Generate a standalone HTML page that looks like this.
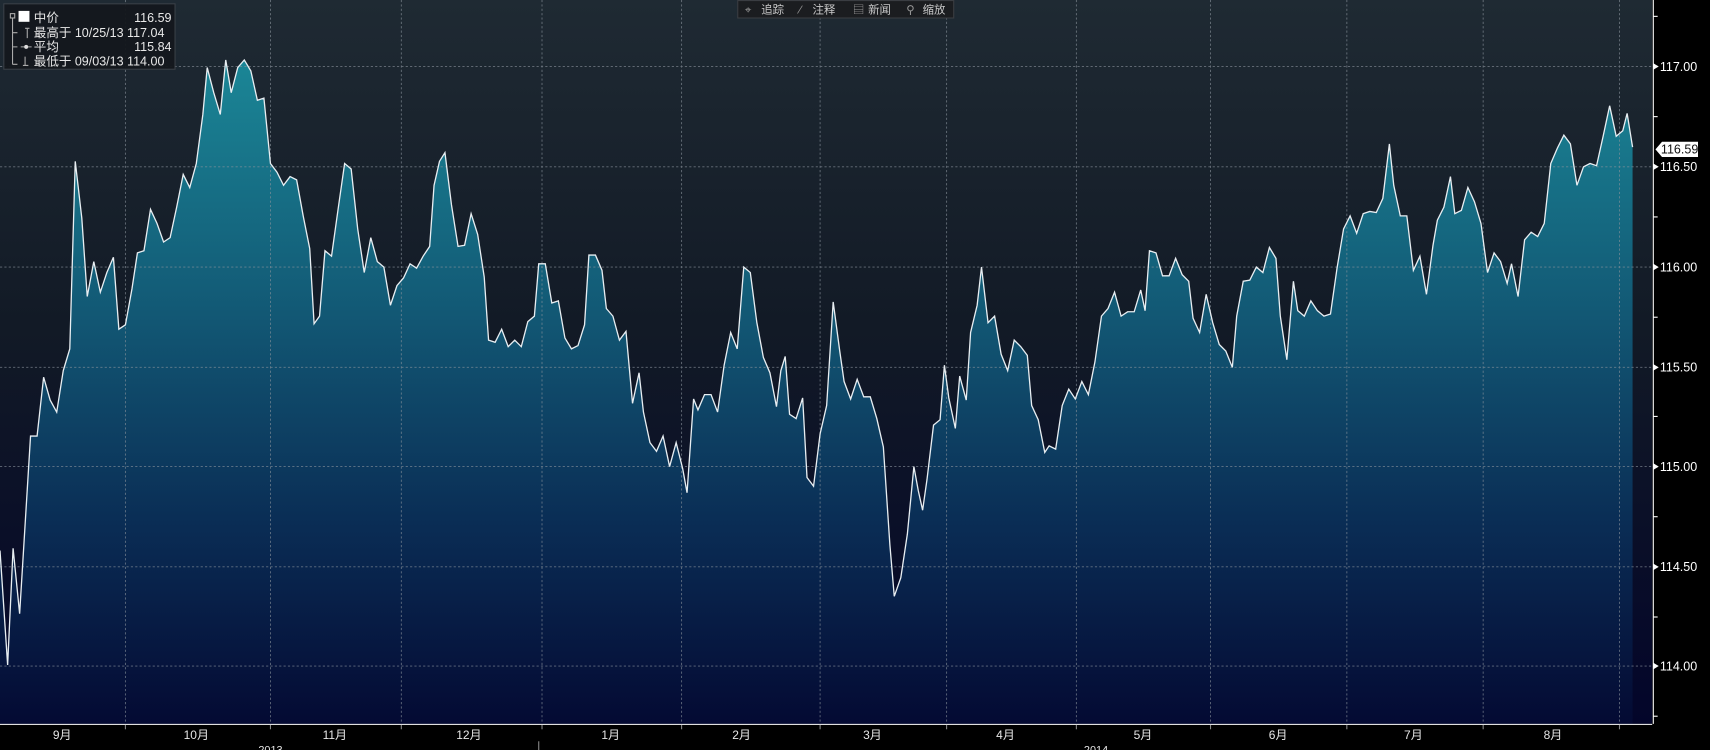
<!DOCTYPE html>
<html><head><meta charset="utf-8"><style>
html,body{margin:0;padding:0;background:#000;width:1710px;height:750px;overflow:hidden}
svg{display:block}
text{font-family:"Liberation Sans","Noto Sans CJK SC",sans-serif}
</style></head><body>
<svg width="1710" height="750" viewBox="0 0 1568 688" preserveAspectRatio="none">
<defs>
<linearGradient id="bg" x1="0" y1="0" x2="0" y2="1">
<stop offset="0" stop-color="#1f2a33"/><stop offset="0.45" stop-color="#121a26"/><stop offset="1" stop-color="#03052a"/>
</linearGradient>
<linearGradient id="fill" x1="0" y1="50" x2="0" y2="664" gradientUnits="userSpaceOnUse">
<stop offset="0" stop-color="#1b8797"/><stop offset="0.35" stop-color="#135d78"/><stop offset="0.7" stop-color="#0a2d55"/><stop offset="1" stop-color="#040a33"/>
</linearGradient>
</defs>
<rect x="0" y="0" width="1568" height="688" fill="#000"/>
<rect x="0" y="0" width="1515" height="664" fill="url(#bg)"/>
<polygon fill="url(#fill)" points="0,664 0,505 7,610 12,503 18,563 28,400 34,400 40,346 46,367 52,378 58,340 64,320 69,148 75,200 80,272 86,240 92,268 98,250 104,236 109,302 115,298 121,265 126,232 132,230 138,192 144,205 150,222 156,218 162,190 168,160 174,172 180,150 186,105 190,62 196,85 202,105 207,55 212,85 218,62 224,55 230,65 236,92 242,90 248,150 254,158 260,170 266,162 272,165 278,198 284,228 288,297 293,290 298,230 304,235 310,192 316,150 322,155 328,210 334,250 340,218 346,240 352,245 358,280 364,262 370,255 376,242 382,246 388,235 394,226 398,170 403,148 408,140 414,188 420,226 426,225 432,196 438,215 444,254 448,312 454,314 460,302 466,318 472,312 478,318 484,295 490,290 494,242 500,242 506,278 512,276 518,310 524,320 530,317 536,298 540,234 546,234 552,248 556,283 562,290 568,312 574,304 580,370 586,342 590,378 596,406 602,414 608,400 614,428 620,406 626,430 630,452 636,366 640,376 646,362 652,362 658,378 664,335 670,305 676,320 682,245 688,250 694,296 700,328 706,342 712,373 716,340 720,327 724,380 730,384 736,365 740,438 746,446 752,398 758,372 764,277 770,322 774,350 780,366 786,348 792,364 798,364 804,384 810,410 816,500 820,547 826,530 832,490 838,428 842,450 846,468 850,440 856,390 862,385 866,335 870,365 876,393 880,345 886,367 890,305 896,280 900,245 906,296 912,290 918,325 924,340 930,312 936,318 942,326 946,372 952,385 958,415 962,409 968,412 974,372 980,357 986,366 992,350 998,362 1004,332 1010,290 1016,283 1022,268 1028,290 1034,286 1040,286 1046,266 1050,285 1054,230 1060,232 1066,253 1072,253 1078,237 1084,252 1090,258 1094,292 1100,305 1106,270 1112,296 1118,316 1124,322 1130,337 1134,290 1140,258 1146,257 1152,245 1158,250 1164,227 1170,237 1174,290 1180,330 1186,258 1190,285 1196,290 1202,276 1208,285 1214,290 1220,288 1226,246 1232,210 1238,198 1244,214 1250,196 1256,194 1262,195 1268,182 1274,132 1278,170 1284,198 1290,198 1296,248 1302,235 1308,270 1314,225 1318,202 1324,190 1330,162 1334,196 1340,193 1346,172 1352,185 1358,205 1364,250 1370,232 1376,240 1382,260 1386,242 1392,272 1398,220 1404,213 1410,217 1416,205 1422,150 1428,136 1434,124 1440,132 1446,170 1452,153 1458,150 1464,152 1470,125 1476,97 1482,125 1488,120 1492,104 1497,135 1497,664"/>
<g stroke="#8a939c" stroke-width="0.8" stroke-dasharray="2,2" opacity="0.7">
<line x1="0" y1="61" x2="1515" y2="61"/><line x1="0" y1="153" x2="1515" y2="153"/><line x1="0" y1="245" x2="1515" y2="245"/><line x1="0" y1="337" x2="1515" y2="337"/><line x1="0" y1="428" x2="1515" y2="428"/><line x1="0" y1="520" x2="1515" y2="520"/><line x1="0" y1="611" x2="1515" y2="611"/>
<line x1="115" y1="0" x2="115" y2="664"/><line x1="248" y1="0" x2="248" y2="664"/><line x1="368" y1="0" x2="368" y2="664"/><line x1="497" y1="0" x2="497" y2="664"/><line x1="625" y1="0" x2="625" y2="664"/><line x1="752" y1="0" x2="752" y2="664"/><line x1="868" y1="0" x2="868" y2="664"/><line x1="987" y1="0" x2="987" y2="664"/><line x1="1110" y1="0" x2="1110" y2="664"/><line x1="1235" y1="0" x2="1235" y2="664"/><line x1="1360" y1="0" x2="1360" y2="664"/><line x1="1485" y1="0" x2="1485" y2="664"/>
</g>
<polyline fill="none" stroke="#e8eef2" stroke-width="1.2" points="0,505 7,610 12,503 18,563 28,400 34,400 40,346 46,367 52,378 58,340 64,320 69,148 75,200 80,272 86,240 92,268 98,250 104,236 109,302 115,298 121,265 126,232 132,230 138,192 144,205 150,222 156,218 162,190 168,160 174,172 180,150 186,105 190,62 196,85 202,105 207,55 212,85 218,62 224,55 230,65 236,92 242,90 248,150 254,158 260,170 266,162 272,165 278,198 284,228 288,297 293,290 298,230 304,235 310,192 316,150 322,155 328,210 334,250 340,218 346,240 352,245 358,280 364,262 370,255 376,242 382,246 388,235 394,226 398,170 403,148 408,140 414,188 420,226 426,225 432,196 438,215 444,254 448,312 454,314 460,302 466,318 472,312 478,318 484,295 490,290 494,242 500,242 506,278 512,276 518,310 524,320 530,317 536,298 540,234 546,234 552,248 556,283 562,290 568,312 574,304 580,370 586,342 590,378 596,406 602,414 608,400 614,428 620,406 626,430 630,452 636,366 640,376 646,362 652,362 658,378 664,335 670,305 676,320 682,245 688,250 694,296 700,328 706,342 712,373 716,340 720,327 724,380 730,384 736,365 740,438 746,446 752,398 758,372 764,277 770,322 774,350 780,366 786,348 792,364 798,364 804,384 810,410 816,500 820,547 826,530 832,490 838,428 842,450 846,468 850,440 856,390 862,385 866,335 870,365 876,393 880,345 886,367 890,305 896,280 900,245 906,296 912,290 918,325 924,340 930,312 936,318 942,326 946,372 952,385 958,415 962,409 968,412 974,372 980,357 986,366 992,350 998,362 1004,332 1010,290 1016,283 1022,268 1028,290 1034,286 1040,286 1046,266 1050,285 1054,230 1060,232 1066,253 1072,253 1078,237 1084,252 1090,258 1094,292 1100,305 1106,270 1112,296 1118,316 1124,322 1130,337 1134,290 1140,258 1146,257 1152,245 1158,250 1164,227 1170,237 1174,290 1180,330 1186,258 1190,285 1196,290 1202,276 1208,285 1214,290 1220,288 1226,246 1232,210 1238,198 1244,214 1250,196 1256,194 1262,195 1268,182 1274,132 1278,170 1284,198 1290,198 1296,248 1302,235 1308,270 1314,225 1318,202 1324,190 1330,162 1334,196 1340,193 1346,172 1352,185 1358,205 1364,250 1370,232 1376,240 1382,260 1386,242 1392,272 1398,220 1404,213 1410,217 1416,205 1422,150 1428,136 1434,124 1440,132 1446,170 1452,153 1458,150 1464,152 1470,125 1476,97 1482,125 1488,120 1492,104 1497,135"/>
<!-- right axis -->
<line x1="1516" y1="0" x2="1516" y2="664" stroke="#fff" stroke-width="1"/>
<g fill="#fff" font-size="11.5">
<g stroke="#fff" stroke-width="1"><line x1="1516" y1="15" x2="1520" y2="15"/><line x1="1516" y1="107" x2="1520" y2="107"/><line x1="1516" y1="199" x2="1520" y2="199"/><line x1="1516" y1="291" x2="1520" y2="291"/><line x1="1516" y1="382" x2="1520" y2="382"/><line x1="1516" y1="474" x2="1520" y2="474"/><line x1="1516" y1="566" x2="1520" y2="566"/><line x1="1516" y1="657" x2="1520" y2="657"/></g>
<polygon points="1516,58 1521,61 1516,64"/><text x="1522" y="65">117.00</text>
<polygon points="1516,150 1521,153 1516,156"/><text x="1522" y="157">116.50</text>
<polygon points="1516,242 1521,245 1516,248"/><text x="1522" y="249">116.00</text>
<polygon points="1516,334 1521,337 1516,340"/><text x="1522" y="341">115.50</text>
<polygon points="1516,425 1521,428 1516,431"/><text x="1522" y="432">115.00</text>
<polygon points="1516,517 1521,520 1516,523"/><text x="1522" y="524">114.50</text>
<polygon points="1516,608 1521,611 1516,614"/><text x="1522" y="615">114.00</text>
<polygon points="1518,137 1524,130 1557,130 1557,144 1524,144" fill="#fff"/>
<text x="1523" y="141" fill="#111">116.59</text>
</g>
<!-- bottom axis -->
<line x1="0" y1="664.5" x2="1515" y2="664.5" stroke="#fff" stroke-width="1"/>
<g stroke="#888" stroke-width="1"><line x1="115" y1="665" x2="115" y2="669"/><line x1="248" y1="665" x2="248" y2="669"/><line x1="368" y1="665" x2="368" y2="669"/><line x1="497" y1="665" x2="497" y2="669"/><line x1="625" y1="665" x2="625" y2="669"/><line x1="752" y1="665" x2="752" y2="669"/><line x1="868" y1="665" x2="868" y2="669"/><line x1="987" y1="665" x2="987" y2="669"/><line x1="1110" y1="665" x2="1110" y2="669"/><line x1="1235" y1="665" x2="1235" y2="669"/><line x1="1360" y1="665" x2="1360" y2="669"/><line x1="1485" y1="665" x2="1485" y2="669"/><line x1="494" y1="680" x2="494" y2="688"/></g>
<g fill="#e6e6e6" font-size="11" text-anchor="middle">
<text x="57" y="678">9月</text><text x="180" y="678">10月</text><text x="307" y="678">11月</text><text x="430" y="678">12月</text><text x="560" y="678">1月</text><text x="680" y="678">2月</text><text x="800" y="678">3月</text><text x="922" y="678">4月</text><text x="1048" y="678">5月</text><text x="1172" y="678">6月</text><text x="1296" y="678">7月</text><text x="1424" y="678">8月</text>
<text x="248" y="691" font-size="10">2013</text><text x="1005" y="691" font-size="10">2014</text>
</g>
<!-- toolbar -->
<rect x="676.5" y="0.5" width="198" height="16" fill="#1b1d20" stroke="#3a3d42"/>
<g fill="#c8c8c8" font-size="10.5">
<text x="683" y="12.5" fill="#999">⌖</text><text x="698" y="12.5">追踪</text>
<text x="733" y="12.5" fill="#999">∕</text><text x="745" y="12.5">注释</text>
<text x="782" y="12.5" fill="#999">▤</text><text x="796" y="12.5">新闻</text>
<text x="831" y="12.5" fill="#999">⚲</text><text x="846" y="12.5">缩放</text>
</g>
<!-- legend -->
<rect x="3.5" y="3.5" width="157" height="60" fill="#14181d" stroke="#3b4148" opacity="0.95"/>
<g stroke="#aaa" stroke-width="1" fill="none">
<rect x="9.5" y="12.5" width="4" height="4"/>
<path d="M11.5 17 V59 M11.5 30 H16 M11.5 43 H16 M11.5 59 H16"/>
<path d="M23 26 H27 M25 26 V35 M19 43 H29 M23 52 V60 M21 60 H26"/>
</g>
<circle cx="24" cy="43" r="1.8" fill="#ddd"/>
<rect x="17" y="10" width="10" height="10" fill="#fff"/>
<g fill="#e8e8e8" font-size="11.5">
<text x="31" y="20">中价</text><text x="123" y="20">116.59</text>
<text x="31" y="34">最高于 10/25/13 117.04</text>
<text x="31" y="47">平均</text><text x="123" y="47">115.84</text>
<text x="31" y="60">最低于 09/03/13 114.00</text>
</g>
</svg>
</body></html>
